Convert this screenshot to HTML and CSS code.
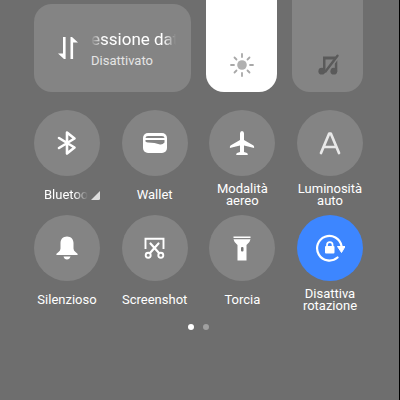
FILE: index.html
```html
<!DOCTYPE html>
<html lang="it">
  <head>
    <meta charset="UTF-8" />
    <meta name="viewport" content="width=device-width, initial-scale=1.0" />
    <title>Centro di controllo</title>
    <link rel="stylesheet" href="styles.css">
  </head>
  <body>
    <main class="panel">
      <section class="top">
        <button class="data-card" type="button">
          <svg class="data-icon" viewBox="0 0 22 24" width="22" height="24">
            <path d="M6 1h2.600v22H7L1 17.500h5zM13.500 23h2.600V6.500H21L15 1h-1.500z" fill="#fff" />
          </svg>
          <span class="data-text">
            <span class="data-title">essione dati</span>
            <span class="data-state">Disattivato</span>
          </span>
        </button>
        <div class="slider slider-light">
          <input type="range" min="0" max="100" value="100" aria-label="Luminosità" />
          <svg class="slider-icon" viewBox="0 0 24 24" width="24" height="24">
            <circle cx="12" cy="12" r="4.800" fill="#b0b0b0" />
            <path d="M12 1v3M12 20v3M1 12h3M20 12h3M4.500 4.500l2 2M17.500 17.500l2 2M4.500 19.500l2-2M17.500 6.500l2-2" stroke="#a8a8a8" stroke-width="1.800" stroke-linecap="round" />
          </svg>
        </div>
        <div class="slider">
          <input type="range" min="0" max="100" value="0" aria-label="Volume" />
          <svg class="slider-icon" viewBox="0 0 24 24" width="24" height="24">
            <path d="M7 3.500h13l-2.500 3h-8v12H7zM18.800 10l2.500-3v11.500h-2.500z" fill="#5a5a5a" />
            <circle cx="5.800" cy="18.200" r="3.400" fill="#5a5a5a" />
            <circle cx="17.800" cy="18.200" r="3.400" fill="#5a5a5a" />
            <path d="M10 19.500L22 3.500" stroke="#848484" stroke-width="3.500" />
            <path d="M9.500 18.500L21.500 2.800" stroke="#5a5a5a" stroke-width="2.400" stroke-linecap="round" />
          </svg>
        </div>
      </section>

      <section class="toggles">
        <button class="toggle" type="button">
          <span class="disc">
            <svg viewBox="0 0 26 26" width="26" height="26">
              <path d="M5 8l15.500 9.500L13 23.500V2.500l7.500 6L5 18" fill="none" stroke="#fff" stroke-width="2.600" stroke-linejoin="round" stroke-linecap="round" />
            </svg>
          </span>
          <span class="label label-more">
            <span class="fade">Bluetooth</span>
            <svg viewBox="0 0 9 9" width="9" height="9">
              <path d="M9 0v7.500Q9 9 7.500 9H0z" fill="#ddd" />
            </svg>
          </span>
        </button>
        <button class="toggle" type="button">
          <span class="disc">
            <svg viewBox="0 0 26 26" width="26" height="26">
              <rect x="1" y="3" width="24" height="20" rx="5" fill="#fff" />
              <path d="M3.500 8Q3.500 6 6 6h14q2.500 0 2.500 2z" fill="#848484" />
              <path d="M3.500 10h19v2.500q-2 2.500-4.500 2l-5.500-1.500-6.500-.5q-1.500 0-2.500-1z" fill="#848484" />
            </svg>
          </span>
          <span class="label">Wallet</span>
        </button>
        <button class="toggle" type="button">
          <span class="disc">
            <svg viewBox="0 0 26 26" width="26" height="26">
              <path d="M13 1q2 0 2 2.500v6.500l9.500 5.500q.8.500.6 2.500L15 15.500v6.500l3 1q.8.300.8 2H7.200q0-1.700.8-2l3-1v-6.500L.9 18q-.2-2 .6-2.500L11 10V3.500Q11 1 13 1z" fill="#fff" />
            </svg>
          </span>
          <span class="label">Modalità<br>aereo</span>
        </button>
        <button class="toggle" type="button">
          <span class="disc">
            <svg viewBox="0 0 26 26" width="26" height="26">
              <path d="M4 23L12.200 3.500h1.600L22 23M7 17h12" fill="none" stroke="#e8e8e8" stroke-width="2.700" stroke-linecap="round" stroke-linejoin="round" />
            </svg>
          </span>
          <span class="label">Luminosità<br>auto</span>
        </button>
        <button class="toggle" type="button">
          <span class="disc">
            <svg viewBox="0 0 26 26" width="26" height="26">
              <path d="M13 1.500c4 0 6.500 2.800 6.500 6.500v5.500q0 2 2 3.500l2 1.800q.8 1.200-.5 1.200H3q-1.300 0-.5-1.200l2-1.800q2-1.500 2-3.500V8c0-3.700 2.500-6.500 6.500-6.500zM9.500 21.500h7q-.8 3-3.500 3t-3.500-3z" fill="#fff" />
            </svg>
          </span>
          <span class="label">Silenzioso</span>
        </button>
        <button class="toggle" type="button">
          <span class="disc">
            <svg viewBox="0 0 26 26" width="26" height="26">
              <g fill="none" stroke="#fff" stroke-width="1.900">
                <path d="M3.500 14V3.800h18V14" />
                <path d="M8.500 8.500l8.500 9.500M16.500 8.500L8 18" stroke-width="2.200" stroke-linecap="round" />
                <circle cx="6.200" cy="20.300" r="2.500" />
                <circle cx="18.800" cy="20.300" r="2.500" />
              </g>
            </svg>
          </span>
          <span class="label">Screenshot</span>
        </button>
        <button class="toggle" type="button">
          <span class="disc">
            <svg viewBox="0 0 26 26" width="26" height="26">
              <path d="M4.500 1.500h17V3h-17zM4.500 4.200h17Q21 7.500 17.500 10v15.500h-9V10Q5 7.500 4.500 4.200z" fill="#fff" />
              <rect x="12" y="12" width="2.500" height="4.500" rx="1" fill="#777" />
            </svg>
          </span>
          <span class="label">Torcia</span>
        </button>
        <button class="toggle toggle-on" type="button" aria-pressed="true">
          <span class="disc">
            <svg viewBox="0 0 30 30" width="30" height="30">
              <path d="M22.500 24.500A12.300 12.300 0 1 1 26.500 13" fill="none" stroke="#fff" stroke-width="2.200" stroke-linecap="round" />
              <path d="M22.500 13.500h7.500l-3.500 6z" fill="#fff" stroke="#fff" stroke-linejoin="round" />
              <rect x="10" y="13" width="9.500" height="7.500" rx="1" fill="#fff" />
              <path d="M12 13.500V12a2.800 2.800 0 0 1 5.600 0v1.500" fill="none" stroke="#fff" stroke-width="1.700" />
            </svg>
          </span>
          <span class="label">Disattiva<br>rotazione</span>
        </button>
      </section>

      <div class="pages">
        <span class="dot dot-current"></span>
        <span class="dot"></span>
      </div>
    </main>
  </body>
</html>
```
FILE: styles.css
```css
* {
  box-sizing: border-box;
}
body {
  margin: 0;
  min-height: 100vh;
  background-color: #6e6e6e;
  border-right: 1px solid #000;
  font-family: Roboto, sans-serif;
  color: #fff;
}
button {
  padding: 0;
  border: none;
  background: none;
  color: inherit;
  font-family: inherit;
  cursor: pointer;
}
.panel {
  padding: 0 36px 0 34px;
}
.top {
  display: grid;
  grid-template-columns: 157fr 71fr 71fr;
  gap: 15px;
  height: 92px;
}
.data-card {
  display: flex;
  align-items: center;
  gap: 12px;
  min-width: 0;
  margin-top: 4px;
  padding: 0 15px 0 23px;
  border-radius: 18px;
  background-color: #848484;
  text-align: left;
}
.data-icon {
  flex: none;
}
.data-text {
  flex: 1;
  min-width: 0;
  padding-top: 4px;
}
.data-title {
  display: block;
  overflow: hidden;
  font-size: 17px;
  line-height: 22px;
  white-space: nowrap;
  -webkit-mask-image: linear-gradient(to right, transparent, #000 12px, #000 72px, transparent);
  mask-image: linear-gradient(to right, transparent, #000 12px, #000 72px, transparent);
}
.data-state {
  display: block;
  font-size: 13px;
  line-height: 22px;
  color: #e4e4e4;
}
.slider {
  position: relative;
  overflow: hidden;
  border-radius: 0 0 18px 18px;
  background-color: #848484;
}
.slider-light {
  background-color: #fff;
}
.slider input {
  appearance: none;
  writing-mode: vertical-lr;
  direction: rtl;
  width: 100%;
  height: 100%;
  margin: 0;
  background: transparent;
}
.slider input::-webkit-slider-thumb {
  appearance: none;
  width: 1px;
  height: 1px;
}
.slider-icon {
  position: absolute;
  bottom: 15px;
  left: 50%;
  transform: translateX(-50%);
  pointer-events: none;
}
.toggles {
  display: grid;
  grid-template-columns: repeat(4, 66px);
  justify-content: space-between;
  row-gap: 8px;
  margin-top: 18px;
}
.toggle {
  display: flex;
  flex-direction: column;
  align-items: center;
  gap: 7px;
}
.disc {
  display: flex;
  align-items: center;
  justify-content: center;
  width: 66px;
  height: 66px;
  border-radius: 50%;
  background-color: #848484;
}
.toggle-on .disc {
  background-color: #3d86ff;
}
.label {
  display: flex;
  align-items: center;
  height: 24px;
  font-size: 13px;
  line-height: 12px;
  white-space: nowrap;
}
.label:has(br) {
  display: block;
}
.label-more {
  align-self: flex-end;
  gap: 3px;
}
.fade {
  width: 44px;
  overflow: hidden;
  line-height: 16px;
  text-align: left;
  -webkit-mask-image: linear-gradient(to right, #000 30px, transparent);
  mask-image: linear-gradient(to right, #000 30px, transparent);
}
.pages {
  display: flex;
  justify-content: center;
  gap: 9px;
  margin-top: 12px;
}
.dot {
  width: 6px;
  height: 6px;
  border-radius: 50%;
  background-color: #a0a0a0;
}
.dot-current {
  background-color: #fff;
}
```
